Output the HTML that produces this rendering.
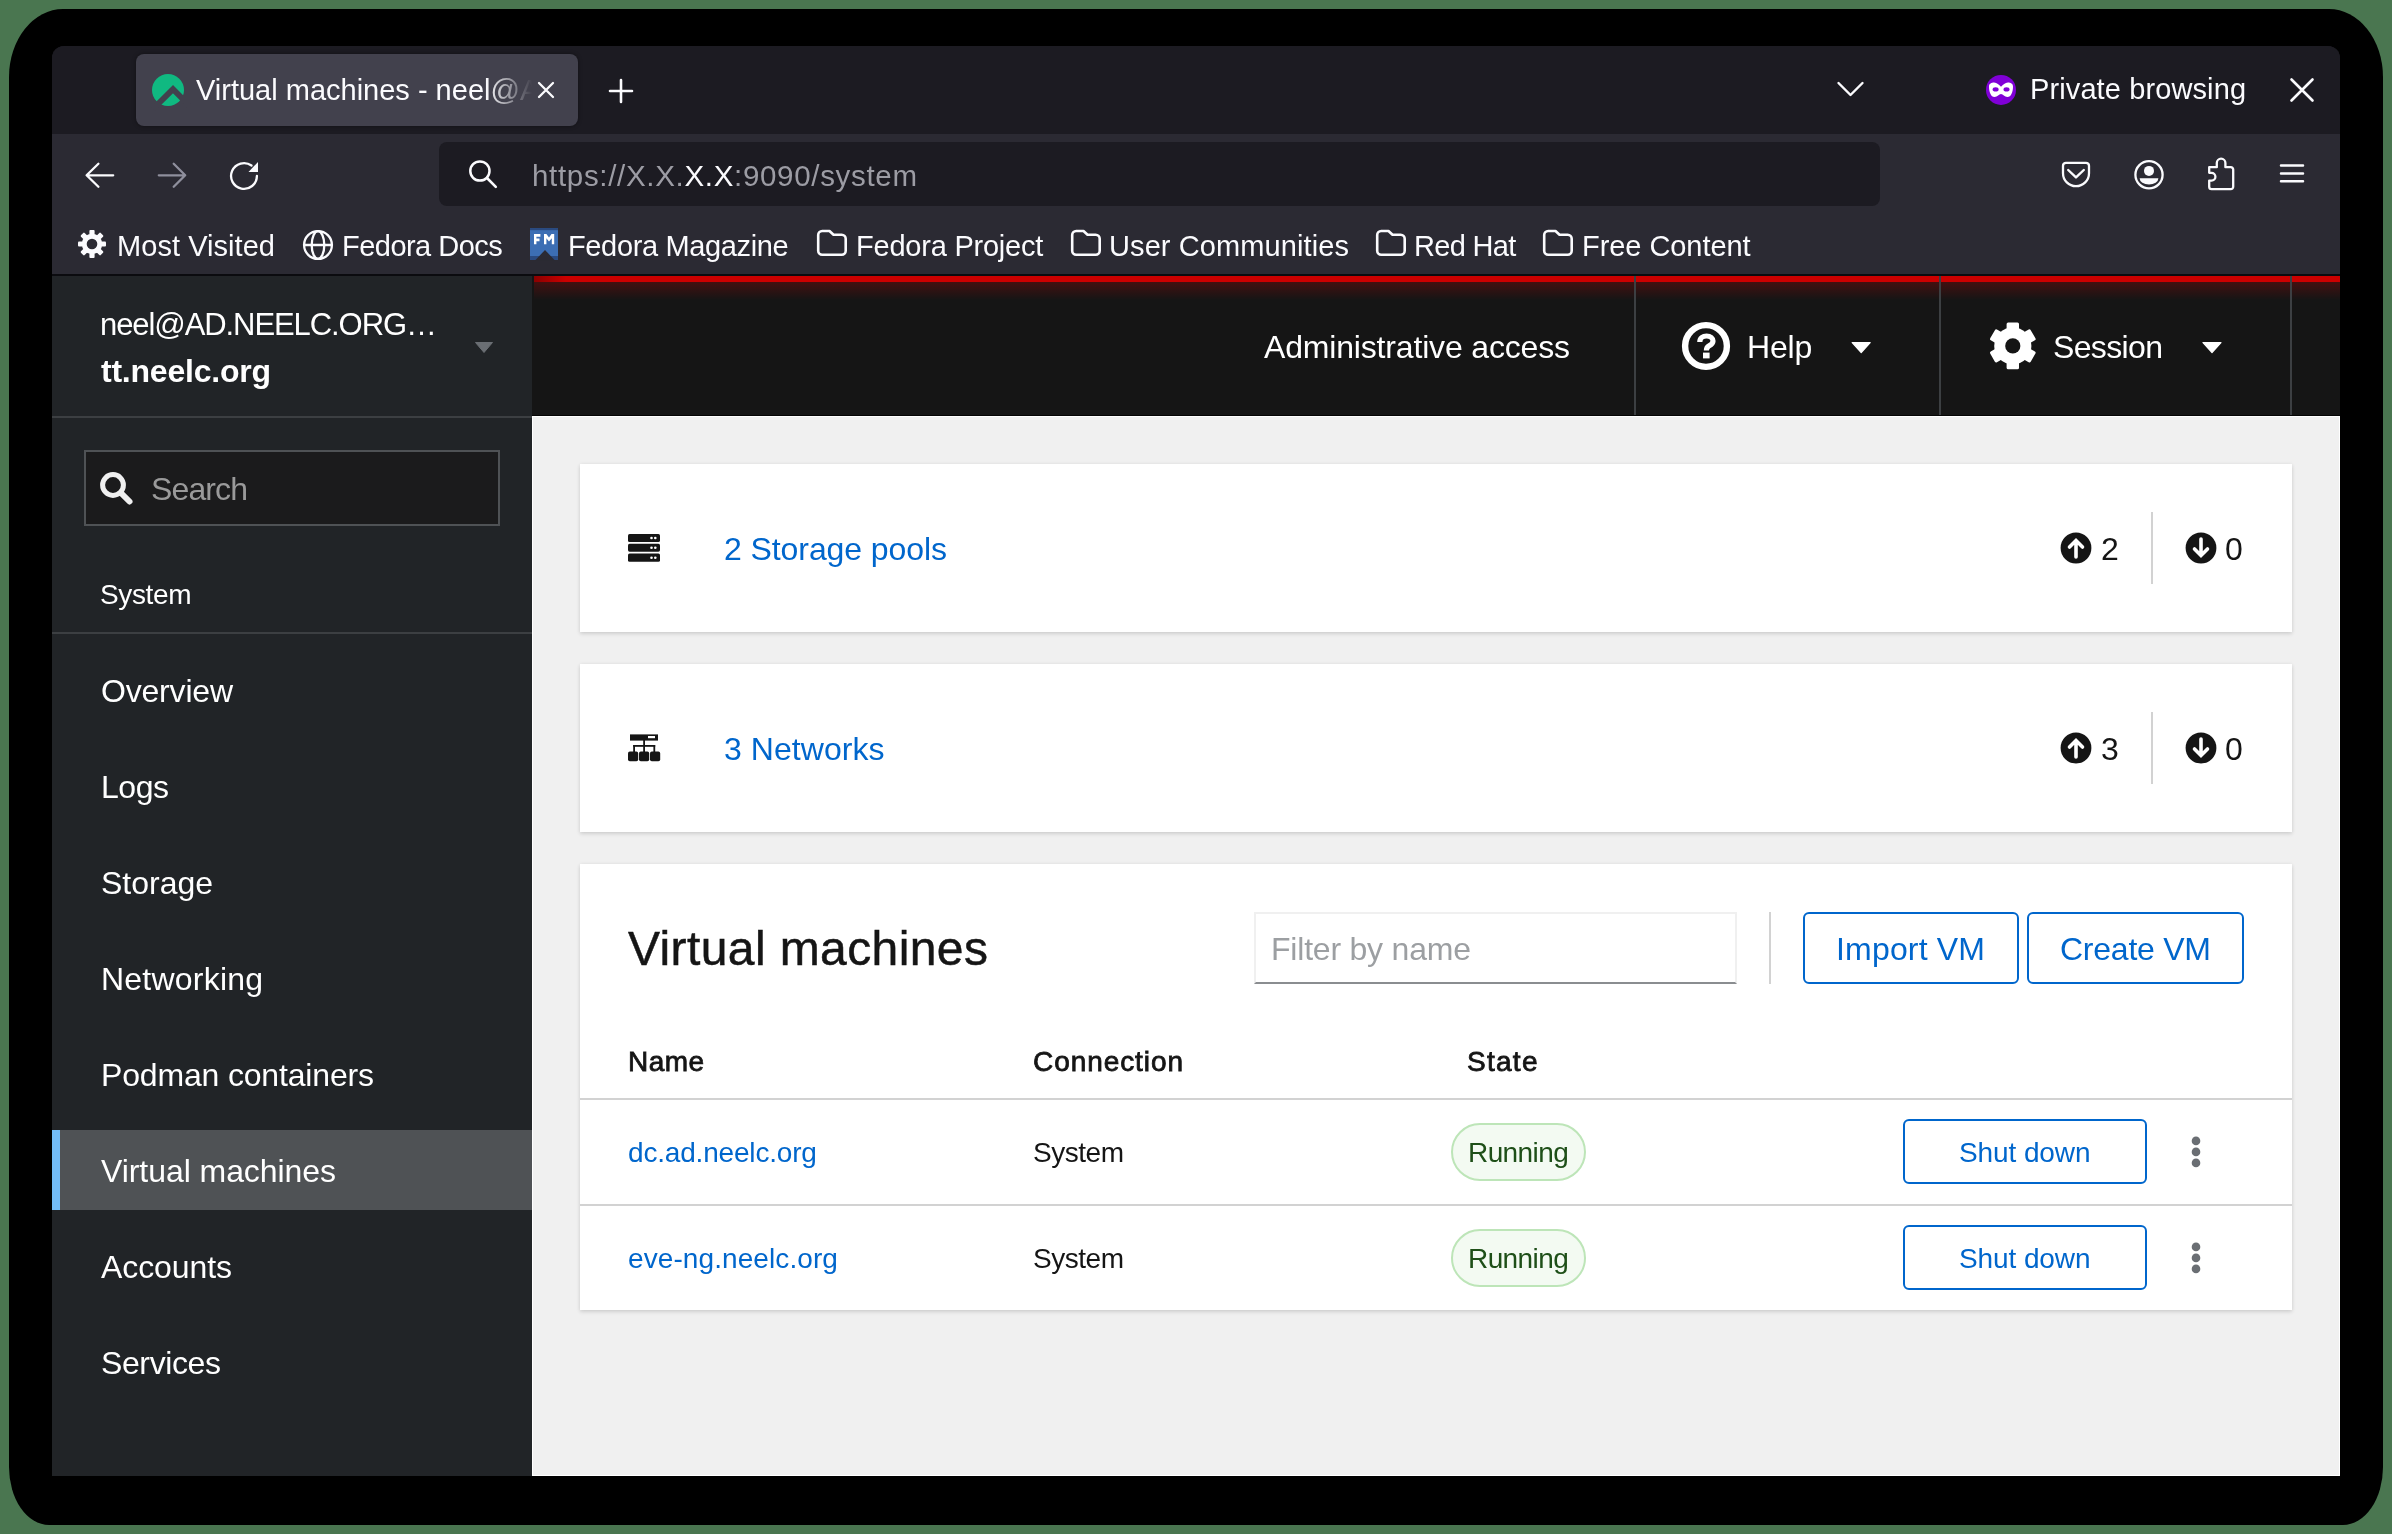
<!DOCTYPE html>
<html><head><meta charset="utf-8">
<style>
*{box-sizing:border-box;margin:0;padding:0}
html,body{width:2392px;height:1534px;overflow:hidden;background:#4a7650;font-family:"Liberation Sans",sans-serif;position:relative}
.a{position:absolute}
.t{position:absolute;white-space:pre;line-height:1;font-family:"Liberation Sans",sans-serif;will-change:transform}
svg{position:absolute;overflow:visible}
#frame{left:9px;top:9px;width:2374px;height:1516px;background:#000;border-radius:54px 54px 40px 40px / 68px 68px 58px 58px}
#win{left:52px;top:46px;width:2288px;height:1430px;background:#1c1b22;border-radius:12px 12px 0 0;overflow:hidden}
.card{background:#fff;box-shadow:0 2px 4px rgba(3,3,3,.12),0 0 4px rgba(3,3,3,.06)}
.btn{border:2px solid #0066cc;border-radius:6px;background:#fff}

</style></head><body>
<div id="frame" class="a"></div>
<div id="win" class="a"></div>
<!-- tab bar -->
<div class="a" style="left:52px;top:46px;width:2288px;height:88px;background:#1c1b22;border-radius:12px 12px 0 0"></div>
<div class="a" style="left:136px;top:54px;width:442px;height:72px;background:#42414d;border-radius:8px;box-shadow:0 0 4px rgba(0,0,0,.4)"></div>
<!-- toolbar -->
<div class="a" style="left:52px;top:134px;width:2288px;height:140px;background:#2b2a33"></div>
<div class="a" style="left:52px;top:274px;width:2288px;height:2px;background:#0b0b0f"></div>
<div class="a" style="left:439px;top:142px;width:1441px;height:64px;background:#1c1b22;border-radius:8px"></div>
<!-- cockpit -->
<div class="a" style="left:52px;top:276px;width:480px;height:1200px;background:#212427"></div>
<div class="a" style="left:52px;top:416px;width:480px;height:2px;background:#3c3f42"></div>
<div class="a" style="left:52px;top:632px;width:480px;height:2px;background:#3c3f42"></div>
<div class="a" style="left:84px;top:450px;width:416px;height:76px;background:#1b1b1c;border:2px solid #4f5255"></div>
<div class="a" style="left:52px;top:1130px;width:480px;height:80px;background:#4f5255"></div>
<div class="a" style="left:52px;top:1130px;width:8px;height:80px;background:#73bcf7"></div>
<!-- header -->
<div class="a" style="left:532px;top:276px;width:1808px;height:140px;background:#151515"></div>
<div class="a" style="left:534px;top:276px;width:1806px;height:6px;background:linear-gradient(to right,#8b0000 0px,#cc0000 32px)"></div>
<div class="a" style="left:534px;top:282px;width:1806px;height:18px;background:linear-gradient(to bottom,rgba(204,0,0,.25),rgba(204,0,0,0))"></div>
<div class="a" style="left:1634px;top:276px;width:2px;height:140px;background:#3c3f42"></div>
<div class="a" style="left:1939px;top:276px;width:2px;height:140px;background:#3c3f42"></div>
<div class="a" style="left:2290px;top:276px;width:2px;height:140px;background:#3c3f42"></div>
<!-- content -->
<div class="a" style="left:532px;top:416px;width:1808px;height:1060px;background:#f0f0f0;border:1px solid #fff"></div>
<div class="a" style="left:532px;top:415px;width:1808px;height:1px;background:#050505"></div>
<div class="a card" style="left:580px;top:464px;width:1712px;height:168px"></div>
<div class="a card" style="left:580px;top:664px;width:1712px;height:168px"></div>
<div class="a" style="left:2151px;top:512px;width:2px;height:72px;background:#d2d2d2"></div>
<div class="a" style="left:2151px;top:712px;width:2px;height:72px;background:#d2d2d2"></div>
<div class="a card" style="left:580px;top:864px;width:1712px;height:446px"></div>
<div class="a" style="left:1254px;top:912px;width:483px;height:72px;border:2px solid #f0f0f0;border-bottom-color:#8a8d90"></div>
<div class="a" style="left:1769px;top:912px;width:2px;height:72px;background:#d2d2d2"></div>
<div class="a btn" style="left:1803px;top:912px;width:216px;height:72px"></div>
<div class="a btn" style="left:2027px;top:912px;width:217px;height:72px"></div>
<div class="a" style="left:580px;top:1098px;width:1712px;height:2px;background:#d2d2d2"></div>
<div class="a" style="left:580px;top:1204px;width:1712px;height:2px;background:#d2d2d2"></div>
<div class="a" style="left:1451px;top:1123px;width:135px;height:58px;background:#f3faf2;border:2px solid #bde5b8;border-radius:30px"></div>
<div class="a" style="left:1451px;top:1229px;width:135px;height:58px;background:#f3faf2;border:2px solid #bde5b8;border-radius:30px"></div>
<div class="a btn" style="left:1903px;top:1119px;width:244px;height:65px"></div>
<div class="a btn" style="left:1903px;top:1225px;width:244px;height:65px"></div>
<!-- ===== ICONS ===== -->
<!-- favicon -->
<svg style="left:152px;top:74px" width="32" height="32" viewBox="0 0 32 32"><circle cx="16" cy="16" r="16" fill="#10b981"/><polyline points="1,35 21,15.2 37,31.2" fill="none" stroke="#42414d" stroke-width="5.8"/></svg>
<!-- tab close, new tab, dropdown, private, close -->
<svg style="left:0;top:0" width="2392" height="300" viewBox="0 0 2392 300">
 <g stroke="#fbfbfe" fill="none" stroke-linecap="round" stroke-linejoin="round">
  <path d="M539,83 L553,97 M553,83 L539,97" stroke-width="2.3"/>
  <path d="M610,91 H632 M621,80 V102" stroke-width="2.6"/>
  <path d="M1838.5,83 L1850.5,95 L1862.5,83" stroke-width="2.4"/>
  <path d="M2291.5,79.5 L2312.5,100.5 M2312.5,79.5 L2291.5,100.5" stroke-width="2.6"/>
  <!-- back / fwd / reload -->
  <path d="M98.4,163.8 L86.6,175.3 L98.4,186.8 M87,175.3 H113.2" stroke-width="2.3"/>
  <path d="M173.7,163.8 L185.2,175.3 L173.7,186.8 M158.8,175.3 H184.8" stroke="#8f8f9d" stroke-width="2.3"/>
  <path d="M256.9,176 A12.9,12.9 0 1 1 251.5,165.5" stroke-width="2.3"/>
  <!-- url search -->
  <circle cx="479.9" cy="171" r="9.6" stroke-width="2.5"/>
  <path d="M487,178 L495.8,186.8" stroke-width="2.6"/>
  <!-- pocket -->
  <path d="M2066,162.8 H2086 A3,3 0 0 1 2089,165.8 V173.2 A13,13 0 0 1 2063,173.2 V165.8 A3,3 0 0 1 2066,162.8 Z" stroke-width="2.3"/>
  <path d="M2068.2,170 L2076,177.4 L2083.8,170" stroke-width="2.4"/>
  <!-- account -->
  <circle cx="2149" cy="174.8" r="13.6" stroke-width="2.3"/>
  <!-- puzzle -->
  <path d="M2209.2,167.2 H2216.8 V163 A4.3,4.3 0 0 1 2225.4,163 V167.2 H2230.8 A2.4,2.4 0 0 1 2233.2,169.6 V186.8 A2.4,2.4 0 0 1 2230.8,189.2 H2211.6 A2.4,2.4 0 0 1 2209.2,186.8 V180.6 H2211.5 A3.9,3.9 0 0 0 2211.5,172.8 H2209.2 Z" stroke-width="2.3"/>
  <!-- hamburger -->
  <path d="M2281,165.5 H2303 M2281,173.4 H2303 M2281,181.3 H2303" stroke-width="2.5"/>
  <!-- globe -->
  <circle cx="318" cy="245" r="13.9" stroke-width="2.3"/>
  <ellipse cx="318" cy="245" rx="6.3" ry="13.9" stroke-width="2.3"/>
  <path d="M304,245 H332" stroke-width="2.3"/>
 </g>
 <g fill="#fbfbfe">
  <path d="M248.5,172 L258,162 L258,172 Z"/>
  <circle cx="2149" cy="170.9" r="5"/>
  <path d="M2139.6,178.3 H2158.4 A9.4,6.2 0 0 1 2139.6,178.3 Z"/>
 </g>
 <!-- private browsing -->
 <circle cx="2001" cy="89.9" r="15" fill="#8000d7"/>
 <g transform="translate(2001,89.9)">
  <path fill="#fff" d="M-12,-3.5 C-12,-6.5 -9.5,-7.5 -7,-7.5 C-4,-7.5 -2,-5 0,-3.2 C2,-5 4,-7.5 7,-7.5 C9.5,-7.5 12,-6.5 12,-3.5 C12,2 10,7 6.5,7 C3.5,7 2,4 0,4 C-2,4 -3.5,7 -6.5,7 C-10,7 -12,2 -12,-3.5 Z"/>
  <ellipse cx="-5.4" cy="-0.5" rx="3" ry="2.1" fill="#8000d7"/>
  <ellipse cx="5.5" cy="-0.5" rx="3" ry="2.1" fill="#8000d7"/>
 </g>
 <!-- gear most visited -->
 <g transform="translate(92,244)" fill="#fbfbfe">
  <circle r="10.2"/>
  <rect x="-2.6" y="-14" width="5.2" height="6" rx="1"/>
  <rect x="-2.6" y="-14" width="5.2" height="6" rx="1" transform="rotate(45)"/><rect x="-2.6" y="-14" width="5.2" height="6" rx="1" transform="rotate(90)"/><rect x="-2.6" y="-14" width="5.2" height="6" rx="1" transform="rotate(135)"/>
  <rect x="-2.6" y="-14" width="5.2" height="6" rx="1" transform="rotate(180)"/><rect x="-2.6" y="-14" width="5.2" height="6" rx="1" transform="rotate(225)"/><rect x="-2.6" y="-14" width="5.2" height="6" rx="1" transform="rotate(270)"/><rect x="-2.6" y="-14" width="5.2" height="6" rx="1" transform="rotate(315)"/>
  <circle r="5.3" fill="#2b2a33"/>
 </g>
 <!-- FM icon -->
 <g>
  <rect x="530" y="228" width="28" height="32" fill="#3c6eb4"/>
  <rect x="530" y="228" width="28" height="2.2" fill="#2a4a80"/>
  <rect x="530" y="256" width="28" height="4" fill="#2a4a80"/>
  <path d="M535,260.5 L545,250 L555,260.5 Z" fill="#2b2a33"/>
  <path d="M534,234 H540.4 V236.8 H536.4 V238.5 H539.5 V241.2 H536.4 V244.2 H534 Z" fill="#fff"/>
  <path d="M544,234 H546.4 L549,237.4 L551.5,234 H554.2 V244.2 H551.8 V238.2 L549,241.4 L546.4,238.2 V244.2 H544 Z" fill="#fff"/>
 </g>
 <!-- folders -->
 <g fill="none" stroke="#fbfbfe" stroke-width="2.6" stroke-linejoin="round">
  <path d="M818.2,235 A4,4 0 0 1 822.2,231 H829.5 L833.5,234.8 H841.7 A4,4 0 0 1 845.7,238.8 V250.8 A4,4 0 0 1 841.7,254.8 H822.2 A4,4 0 0 1 818.2,250.8 Z"/>
  <path d="M818.2,235 A4,4 0 0 1 822.2,231 H829.5 L833.5,234.8 H841.7 A4,4 0 0 1 845.7,238.8 V250.8 A4,4 0 0 1 841.7,254.8 H822.2 A4,4 0 0 1 818.2,250.8 Z" transform="translate(254,0)"/>
  <path d="M818.2,235 A4,4 0 0 1 822.2,231 H829.5 L833.5,234.8 H841.7 A4,4 0 0 1 845.7,238.8 V250.8 A4,4 0 0 1 841.7,254.8 H822.2 A4,4 0 0 1 818.2,250.8 Z" transform="translate(559,0)"/>
  <path d="M818.2,235 A4,4 0 0 1 822.2,231 H829.5 L833.5,234.8 H841.7 A4,4 0 0 1 845.7,238.8 V250.8 A4,4 0 0 1 841.7,254.8 H822.2 A4,4 0 0 1 818.2,250.8 Z" transform="translate(726,0)"/>
 </g>
 <!-- sidebar caret -->
 <path d="M475.5,342.5 H492.5 L484,352.5 Z" fill="#6a6e73" stroke="#6a6e73" stroke-width="1" stroke-linejoin="round"/>
</svg>
<!-- cockpit icons -->
<svg style="left:0;top:0" width="2392" height="1534" viewBox="0 0 2392 1534">
 <!-- sidebar search -->
 <g stroke="#f0f0f0" fill="none">
  <circle cx="113" cy="485" r="10.4" stroke-width="5"/>
  <path d="M121,493 L129.5,501.5" stroke-width="6" stroke-linecap="round"/>
 </g>
 <!-- help -->
 <g fill="none" stroke="#fff">
  <circle cx="1706" cy="346" r="20.9" stroke-width="6.4"/>
  <path d="M1699.8,342 C1699.8,337.8 1702.9,336 1706.6,336 C1710.4,336 1713,338.3 1713,341.1 C1713,343.9 1711,344.9 1709,345.9 C1707.4,346.7 1706.4,347.5 1706.4,350.6" stroke-width="5.2"/>
 </g>
 <rect x="1703" y="352.6" width="6.6" height="5.8" fill="#fff"/>
 <path d="M1852.2,342.5 H1870.2 L1861.2,352.5 Z" fill="#fff" stroke="#fff" stroke-width="1.2" stroke-linejoin="round"/>
 <path d="M2203,342.5 H2221 L2212,352.5 Z" fill="#fff" stroke="#fff" stroke-width="1.2" stroke-linejoin="round"/>
 <!-- session gear -->
 <g transform="translate(2012.8,345.9)" fill="#fff">
  <circle r="18.6"/>
  <rect x="-6.2" y="-23.4" width="12.4" height="8" rx="1.5"/>
  <rect x="-6.2" y="-23.4" width="12.4" height="8" rx="1.5" transform="rotate(60)"/><rect x="-6.2" y="-23.4" width="12.4" height="8" rx="1.5" transform="rotate(120)"/><rect x="-6.2" y="-23.4" width="12.4" height="8" rx="1.5" transform="rotate(180)"/><rect x="-6.2" y="-23.4" width="12.4" height="8" rx="1.5" transform="rotate(240)"/><rect x="-6.2" y="-23.4" width="12.4" height="8" rx="1.5" transform="rotate(300)"/>
  <circle r="7.6" fill="#151515"/>
 </g>
 <!-- storage icon -->
 <g fill="#151515">
  <rect x="628" y="534" width="32" height="8" rx="1.6"/>
  <rect x="628" y="543.7" width="32" height="8" rx="1.6"/>
  <rect x="628" y="553.6" width="32" height="8.2" rx="1.6"/>
 </g>
 <g fill="#fff">
  <circle cx="651.5" cy="538" r="1.3"/><circle cx="655.3" cy="538" r="1.3"/>
  <circle cx="651.5" cy="547.7" r="1.3"/><circle cx="655.3" cy="547.7" r="1.3"/>
  <circle cx="651.5" cy="557.7" r="1.3"/><circle cx="655.3" cy="557.7" r="1.3"/>
 </g>
 <!-- network icon -->
 <g fill="#151515">
  <rect x="630" y="734.4" width="28" height="6.2"/>
  <rect x="643.2" y="740" width="1.8" height="6"/>
  <rect x="633.2" y="745" width="22" height="1.8"/>
  <rect x="633.2" y="745" width="1.8" height="7"/>
  <rect x="643.2" y="745" width="1.8" height="7"/>
  <rect x="653.4" y="745" width="1.8" height="7"/>
  <rect x="628" y="751.6" width="10.2" height="9.6" rx="1.8"/>
  <rect x="639" y="751.6" width="10.2" height="9.6" rx="1.8"/>
  <rect x="650" y="751.6" width="10.2" height="9.6" rx="1.8"/>
 </g>
 <rect x="648" y="736" width="7" height="2.2" fill="#fff"/>
 <!-- up/down arrows -->
 <g>
  <circle cx="2076" cy="548" r="15.4" fill="#151515"/>
  <path d="M2076,557 V541 M2069.5,547 L2076,540.5 L2082.5,547" stroke="#fff" stroke-width="3.6" fill="none" stroke-linecap="round" stroke-linejoin="miter"/>
  <circle cx="2201" cy="548" r="15.4" fill="#151515"/>
  <path d="M2201,539 V555 M2194.5,549 L2201,555.5 L2207.5,549" stroke="#fff" stroke-width="3.6" fill="none" stroke-linecap="round" stroke-linejoin="miter"/>
 </g>
 <g transform="translate(0,200)">
  <circle cx="2076" cy="548" r="15.4" fill="#151515"/>
  <path d="M2076,557 V541 M2069.5,547 L2076,540.5 L2082.5,547" stroke="#fff" stroke-width="3.6" fill="none" stroke-linecap="round" stroke-linejoin="miter"/>
  <circle cx="2201" cy="548" r="15.4" fill="#151515"/>
  <path d="M2201,539 V555 M2194.5,549 L2201,555.5 L2207.5,549" stroke="#fff" stroke-width="3.6" fill="none" stroke-linecap="round" stroke-linejoin="miter"/>
 </g>
 <!-- kebabs -->
 <g fill="#6a6e73">
  <circle cx="2196" cy="1140.9" r="4.3"/><circle cx="2196" cy="1151.9" r="4.3"/><circle cx="2196" cy="1162.9" r="4.3"/>
  <circle cx="2196" cy="1246.9" r="4.3"/><circle cx="2196" cy="1257.9" r="4.3"/><circle cx="2196" cy="1268.9" r="4.3"/>
 </g>
</svg>

<div class="t" style="left:196.0px;top:76.2px;font-size:29px;color:#fbfbfe;width:336px;overflow:hidden;-webkit-mask-image:linear-gradient(to right,#000 290px,transparent 336px);">Virtual machines - neel@AD</div>
<div class="t" style="left:532.0px;top:161.0px;font-size:29.5px;color:#fbfbfe;letter-spacing:0.68px;"><span style="color:#9c9ca4">https://X.X.</span>X.X<span style="color:#9c9ca4">:9090/system</span></div>
<div class="t" style="left:2030.0px;top:75.2px;font-size:29px;color:#fbfbfe;letter-spacing:0.11px;">Private browsing</div>
<div class="t" style="left:117.0px;top:231.5px;font-size:29px;color:#fbfbfe;letter-spacing:0.05px;">Most Visited</div>
<div class="t" style="left:342.0px;top:231.5px;font-size:29px;color:#fbfbfe;letter-spacing:-0.53px;">Fedora Docs</div>
<div class="t" style="left:568.4px;top:231.5px;font-size:29px;color:#fbfbfe;letter-spacing:-0.36px;">Fedora Magazine</div>
<div class="t" style="left:856.0px;top:231.5px;font-size:29px;color:#fbfbfe;letter-spacing:-0.22px;">Fedora Project</div>
<div class="t" style="left:1108.5px;top:231.5px;font-size:29px;color:#fbfbfe;letter-spacing:0.10px;">User Communities</div>
<div class="t" style="left:1413.6px;top:231.5px;font-size:29px;color:#fbfbfe;letter-spacing:-0.67px;">Red Hat</div>
<div class="t" style="left:1582.0px;top:231.5px;font-size:29px;color:#fbfbfe;letter-spacing:-0.06px;">Free Content</div>
<div class="t" style="left:100.0px;top:308.5px;font-size:31px;color:#ffffff;letter-spacing:-1.08px;">neel@AD.NEELC.ORG…</div>
<div class="t" style="left:101.0px;top:354.6px;font-size:32px;color:#ffffff;font-weight:700;letter-spacing:-0.22px;">tt.neelc.org</div>
<div class="t" style="left:150.6px;top:473.4px;font-size:32px;color:#9a9a9a;letter-spacing:-0.88px;">Search</div>
<div class="t" style="left:100.0px;top:581.1px;font-size:28px;color:#ffffff;letter-spacing:-0.37px;">System</div>
<div class="t" style="left:100.8px;top:675.4px;font-size:32px;color:#ffffff;letter-spacing:-0.19px;">Overview</div>
<div class="t" style="left:100.8px;top:771.4px;font-size:32px;color:#ffffff;letter-spacing:-0.46px;">Logs</div>
<div class="t" style="left:100.8px;top:867.4px;font-size:32px;color:#ffffff;letter-spacing:-0.01px;">Storage</div>
<div class="t" style="left:100.8px;top:963.4px;font-size:32px;color:#ffffff;letter-spacing:0.22px;">Networking</div>
<div class="t" style="left:100.8px;top:1059.4px;font-size:32px;color:#ffffff;letter-spacing:-0.17px;">Podman containers</div>
<div class="t" style="left:100.8px;top:1155.4px;font-size:32px;color:#ffffff;letter-spacing:-0.06px;">Virtual machines</div>
<div class="t" style="left:100.8px;top:1251.4px;font-size:32px;color:#ffffff;letter-spacing:-0.09px;">Accounts</div>
<div class="t" style="left:100.8px;top:1347.4px;font-size:32px;color:#ffffff;letter-spacing:-0.39px;">Services</div>
<div class="t" style="left:1264.0px;top:331.2px;font-size:32px;color:#ffffff;letter-spacing:-0.17px;">Administrative access</div>
<div class="t" style="left:1746.6px;top:331.2px;font-size:32px;color:#ffffff;letter-spacing:-0.17px;">Help</div>
<div class="t" style="left:2053.0px;top:331.2px;font-size:32px;color:#ffffff;letter-spacing:-0.64px;">Session</div>
<div class="t" style="left:724.0px;top:532.9px;font-size:32px;color:#0066cc;letter-spacing:-0.08px;">2 Storage pools</div>
<div class="t" style="left:724.0px;top:732.9px;font-size:32px;color:#0066cc;letter-spacing:0.05px;">3 Networks</div>
<div class="t" style="left:2101.0px;top:532.9px;font-size:32px;color:#151515;">2</div>
<div class="t" style="left:2225.0px;top:532.9px;font-size:32px;color:#151515;">0</div>
<div class="t" style="left:2101.0px;top:732.9px;font-size:32px;color:#151515;">3</div>
<div class="t" style="left:2225.0px;top:732.9px;font-size:32px;color:#151515;">0</div>
<div class="t" style="left:628.0px;top:925.4px;font-size:48px;color:#151515;letter-spacing:0.40px;-webkit-text-stroke:0.5px #151515;">Virtual machines</div>
<div class="t" style="left:1271.0px;top:933.4px;font-size:32px;color:#9c9fa2;letter-spacing:-0.21px;">Filter by name</div>
<div class="t" style="left:1836.0px;top:933.4px;font-size:32px;color:#0066cc;letter-spacing:0.18px;">Import VM</div>
<div class="t" style="left:2059.5px;top:933.4px;font-size:32px;color:#0066cc;letter-spacing:-0.24px;">Create VM</div>
<div class="t" style="left:628.0px;top:1048.3px;font-size:28px;color:#151515;letter-spacing:0.43px;-webkit-text-stroke:0.8px #151515;">Name</div>
<div class="t" style="left:1032.8px;top:1048.3px;font-size:28px;color:#151515;letter-spacing:0.93px;-webkit-text-stroke:0.8px #151515;">Connection</div>
<div class="t" style="left:1467.0px;top:1048.3px;font-size:28px;color:#151515;letter-spacing:1.28px;-webkit-text-stroke:0.8px #151515;">State</div>
<div class="t" style="left:628.0px;top:1138.9px;font-size:28px;color:#0066cc;letter-spacing:-0.18px;">dc.ad.neelc.org</div>
<div class="t" style="left:1032.8px;top:1138.9px;font-size:28px;color:#151515;letter-spacing:-0.47px;">System</div>
<div class="t" style="left:1468.0px;top:1138.9px;font-size:28px;color:#1e4f18;letter-spacing:-0.59px;">Running</div>
<div class="t" style="left:1959.3px;top:1138.9px;font-size:28px;color:#0066cc;letter-spacing:-0.10px;">Shut down</div>
<div class="t" style="left:628.0px;top:1244.9px;font-size:28px;color:#0066cc;letter-spacing:0.09px;">eve-ng.neelc.org</div>
<div class="t" style="left:1032.8px;top:1244.9px;font-size:28px;color:#151515;letter-spacing:-0.47px;">System</div>
<div class="t" style="left:1468.0px;top:1244.9px;font-size:28px;color:#1e4f18;letter-spacing:-0.59px;">Running</div>
<div class="t" style="left:1959.3px;top:1244.9px;font-size:28px;color:#0066cc;letter-spacing:-0.10px;">Shut down</div>
</body></html>
